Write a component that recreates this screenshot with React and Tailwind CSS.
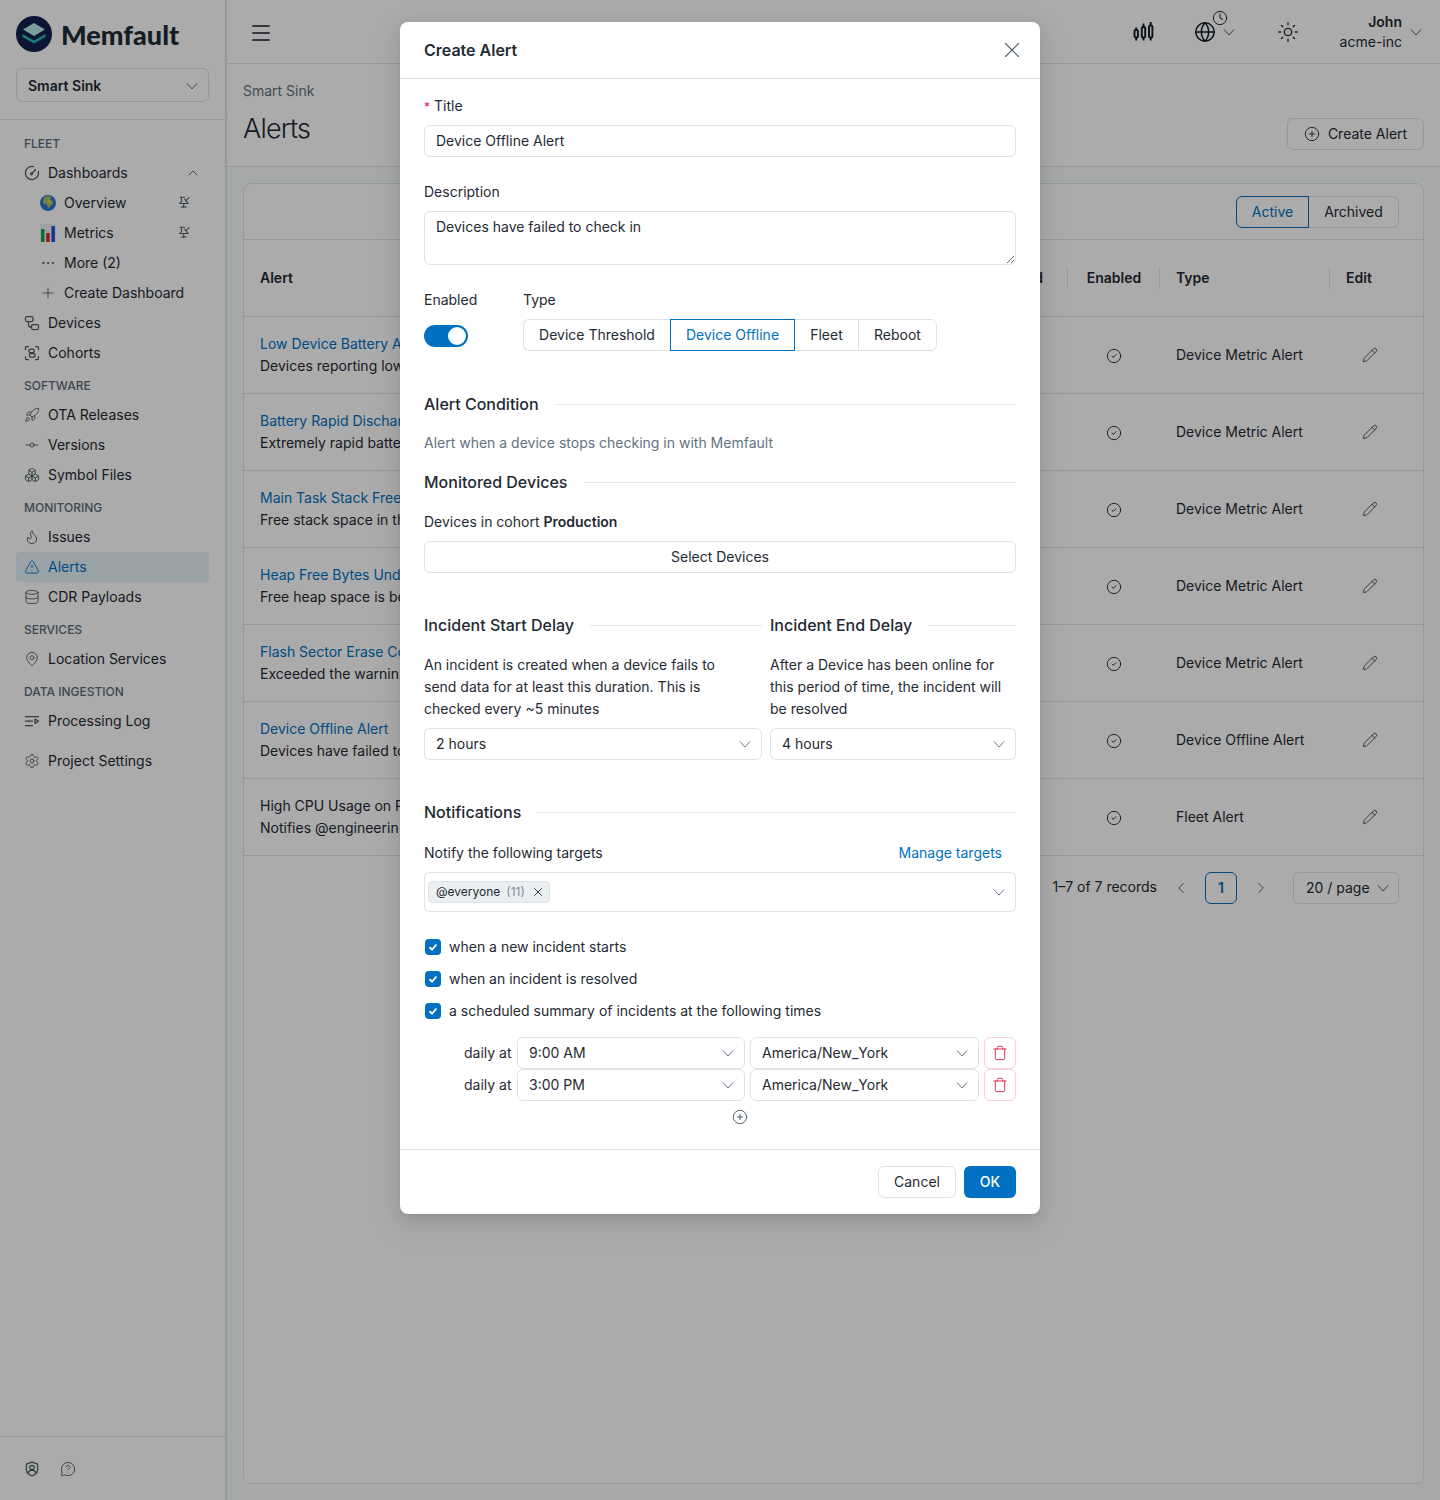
import React from "react";
import {
  ChevronUp, ChevronLeft, ChevronRight, Plus, Ellipsis, Rocket, GitCommitHorizontal, Flame, TriangleAlert, Database,
  MapPin, Settings, Pencil, CirclePlus, CircleCheck, Globe, Sun, Clock, Trash, X, Menu, MessageCircleQuestion, Boxes,
} from "lucide-react";

const Chev = ({ className = "" }) => (
  <svg width="14" height="14" viewBox="0 0 14 14" fill="none" stroke="currentColor" strokeWidth="1" className={className}>
    <path d="M2 4.500 7 10l5-5.500" />
  </svg>
);
const S = ({ children, size = 16, className = "" }) => (
  <svg width={size} height={size} viewBox="0 0 16 16" fill="none" stroke="currentColor" strokeWidth="1.250" strokeLinecap="round" strokeLinejoin="round" className={className}>{children}</svg>
);
const GaugeI = () => <S><path d="M9.500 1.600A6.600 6.600 0 1 0 14.400 6.500" /><circle cx="7.500" cy="8.800" r="1" /><path d="M8.200 8.200l3.300-3.700" /></S>;
const DevicesI = () => <S><rect x="1.500" y="1.500" width="7.500" height="5" rx="1.500" /><rect x="7.500" y="9.500" width="7" height="5" rx="1.500" /><path d="M4.500 6.500v3.500a2 2 0 0 0 2 2h1" /></S>;
const CohortsI = () => <S><path d="M1.500 4.500V2.500a1 1 0 0 1 1-1h2M11.500 1.500h2a1 1 0 0 1 1 1v2M1.500 11.500v2a1 1 0 0 0 1 1h2M14.500 11.500v2a1 1 0 0 1-1 1h-2" /><rect x="5" y="4" width="5" height="3.500" rx="1" /><rect x="5.500" y="8.500" width="5.500" height="3.500" rx="1" /></S>;
const LogI = () => <S><path d="M1.500 3.500h13M1.500 8h7M1.500 12.500h7" /><path d="M11 6l3.500 2.200L11 10.500z" /></S>;
const ShieldI = () => <S><path d="M8 1.200l5.600 2v5.200c0 3-2.600 5.200-5.600 6.400-3-1.200-5.600-3.400-5.600-6.400V3.200z" /><circle cx="8" cy="6.500" r="2.200" /><path d="M4.200 12c.6-2 2-2.800 3.800-2.800s3.200.8 3.800 2.800" /></S>;
const PinI = () => (
  <S size={14}><path d="M2.500 1.500h5M3.500 1.500l.8 4.500L2 8.500h9.500L9.500 6" /><path d="M6.500 8.500v4.500M3.500 12.500h6M7.500 3.800l1.500 1.500 3.500-3.500" /></S>
);
const GlobeEmoji = () => (
  <svg width="18" height="18" viewBox="0 0 18 18">
    <circle cx="9" cy="9" r="9" fill="#2f74d0" />
    <path d="M5 2.500C7 1 11 1 12.500 2c.8 1-1 2-1 3.200s2.500 1.300 3.200 2.300-1 3-2.300 4.300-2 3-3 2.700S8.500 11.500 7.500 10.500 4 9.800 3.600 8.300 4 4 5 2.500z" fill="#a8c25e" />
    <path d="M10 5c1 .5 2 1.500 1.500 3s-1.800 1-2.500 0S9 4.500 10 5z" fill="#f0d070" />
  </svg>
);
const ChartEmoji = () => (
  <svg width="16" height="18" viewBox="0 0 16 18">
    <rect width="16" height="18" fill="#eef1f6" />
    <rect x="1" y="5" width="3.500" height="13" fill="#16a34a" />
    <rect x="6.200" y="9" width="3.500" height="9" fill="#dc2626" />
    <rect x="11.400" y="2" width="3.500" height="16" fill="#1d4ed8" />
  </svg>
);
const Candle = () => (
  <svg width="22" height="22" viewBox="0 0 22 22" fill="none" stroke="currentColor" strokeWidth="1.900">
    <rect x="1.500" y="9" width="3.400" height="7.500" rx="1.300" /><path d="M3.200 6.500V9M3.200 16.500v3" />
    <rect x="8.800" y="6" width="3.400" height="10.500" rx="1.300" /><path d="M10.500 2.500V6M10.500 16.500v3" />
    <rect x="16" y="4.500" width="3.400" height="12" rx="1.300" /><path d="M17.700 1V4.500M17.700 16.500v3" />
  </svg>
);

const Ic = (C) => <C size={16} strokeWidth={1.350} />;

const Label = ({ children }) => (
  <div className="h-8 pl-2 pt-1 flex items-center text-xs font-medium text-[#5a6b78]">{children}</div>
);
const Item = ({ icon, children, active }) => (
  <div className={`h-[30px] pl-2 flex items-center gap-2 rounded ${active ? "bg-[#e4f3f8] text-[#0071c2]" : "text-[#1f2a33]"}`}>
    <span className={`w-4 h-4 flex items-center justify-center shrink-0 ${active ? "text-[#0071c2]" : "text-[#4b5b66]"}`}>{icon}</span>
    <span>{children}</span>
  </div>
);
const Sub = ({ icon, children, pin }) => (
  <div className="h-[30px] pl-6 pr-[17px] flex items-center gap-2 text-[#1f2a33]">
    <span className="w-4 h-[18px] flex items-center justify-center shrink-0 text-[#4b5b66]">{icon}</span>
    <span className="flex-1">{children}</span>
    {pin && <span className="text-[#4b5b66]"><PinI /></span>}
  </div>
);

const Sidebar = () => (
  <aside className="w-[227px] shrink-0 h-full border-r-2 border-[#dde6e8] flex flex-col bg-white text-sm">
    <div className="h-[68px] pl-4 flex items-center gap-2">
      <svg width="36" height="36" viewBox="0 0 36 36">
        <circle cx="18" cy="18" r="18" fill="#14204f" />
        <path d="M18 7l11 6.500L18 20 7 13.500z" fill="#b7ece6" />
        <path d="M6.500 18l11.500 6.500L29.500 18v3L18 27.500 6.500 21z" fill="#2bb6b0" />
      </svg>
      <span className="font-['Lato',sans-serif] font-black text-[27px] leading-none text-[#1e2c34] ml-[1px]">Memfault</span>
    </div>
    <div className="px-4 pb-[17px] border-b border-[#dde6e8]">
      <div className="h-[34px] border border-[#dde3e6] rounded-md pl-[11px] pr-[9px] pt-[1px] flex items-center justify-between">
        <span className="font-semibold text-[#1f2a33]">Smart Sink</span>
        <Chev className="text-[#64748b]" />
      </div>
    </div>
    <nav className="px-4 pt-[6px] flex-1">
      <Label>FLEET</Label>
      <div className="h-[30px] pl-2 pr-2 flex items-center gap-2 text-[#1f2a33]">
        <span className="w-4 h-4 text-[#4b5b66]"><GaugeI /></span>
        <span className="flex-1">Dashboards</span>
        <ChevronUp size={16} strokeWidth={1.300} className="text-[#4b5b66]" />
      </div>
      <Sub icon={<GlobeEmoji />} pin>Overview</Sub>
      <Sub icon={<ChartEmoji />} pin>Metrics</Sub>
      <Sub icon={<Ellipsis size={16} strokeWidth={1.500} />}>More (2)</Sub>
      <Sub icon={<Plus size={16} strokeWidth={1.300} />}>Create Dashboard</Sub>
      <Item icon={<DevicesI />}>Devices</Item>
      <Item icon={<CohortsI />}>Cohorts</Item>
      <Label>SOFTWARE</Label>
      <Item icon={Ic(Rocket)}>OTA Releases</Item>
      <Item icon={Ic(GitCommitHorizontal)}>Versions</Item>
      <Item icon={Ic(Boxes)}>Symbol Files</Item>
      <Label>MONITORING</Label>
      <Item icon={Ic(Flame)}>Issues</Item>
      <Item icon={Ic(TriangleAlert)} active>Alerts</Item>
      <Item icon={Ic(Database)}>CDR Payloads</Item>
      <Label>SERVICES</Label>
      <Item icon={Ic(MapPin)}>Location Services</Item>
      <Label>DATA INGESTION</Label>
      <Item icon={<LogI />}>Processing Log</Item>
      <div className="mt-2.5"><Item icon={Ic(Settings)}>Project Settings</Item></div>
    </nav>
    <div className="h-[64px] border-t border-[#dde6e8] pl-6 pt-[24px] flex items-start gap-5 text-[#4b5b66]">
      <ShieldI />
      <MessageCircleQuestion size={16} strokeWidth={1.350} />
    </div>
  </aside>
);

const rows = [
  ["Low Device Battery A", "Devices reporting low", "Device Metric Alert", true],
  ["Battery Rapid Dischar", "Extremely rapid batte", "Device Metric Alert", true],
  ["Main Task Stack Free", "Free stack space in th", "Device Metric Alert", true],
  ["Heap Free Bytes Und", "Free heap space is be", "Device Metric Alert", true],
  ["Flash Sector Erase Co", "Exceeded the warnin", "Device Metric Alert", true],
  ["Device Offline Alert", "Devices have failed to", "Device Offline Alert", true],
  ["High CPU Usage on P", "Notifies @engineerin", "Fleet Alert", false],
];

const Sep = () => <span className="absolute -left-px top-1/2 -translate-y-1/2 h-[22px] w-px bg-[#e3e8ea]" />;

const Main = () => (
  <main className="flex-1 min-w-0 h-full flex flex-col bg-[#fafdfd] text-sm text-[#1f2a33]">
    <header className="h-16 shrink-0 bg-white border-b border-[#dde6e8] flex items-center pl-6 pr-[17px]">
      <Menu size={24} strokeWidth={1.700} className="text-[#111827] -ml-[2px] mt-[2px]" />
      <div className="ml-auto flex items-center">
        <span className="text-[#111827]"><Candle /></span>
        <div className="relative ml-[39px] flex items-center text-[#111827]">
          <Globe size={22} strokeWidth={1.600} />
          <Clock size={16} strokeWidth={1.400} className="absolute left-[18px] -top-[11px] bg-white rounded-full" />
          <Chev className="text-[#4b5b66] ml-[6px]" />
        </div>
        <span className="ml-[41px] text-[#1f2a33]"><Sun size={22} strokeWidth={1.500} /></span>
        <div className="ml-[41px] text-right">
          <div className="font-semibold leading-5">John</div>
          <div className="leading-5">acme-inc</div>
        </div>
        <Chev className="ml-[7px] text-[#4b5b66]" />
      </div>
    </header>
    <section className="h-[103px] shrink-0 bg-white border-b border-[#dde6e8] pl-4 pr-4 relative">
      <div className="pt-4 leading-[22px] text-[#5f7380]">Smart Sink</div>
      <div className="mt-[10px] flex items-start justify-between">
        <h1 className="text-[27px] font-light leading-[34px] tracking-[-0.8px]">Alerts</h1>
        <div className="mt-[6px] h-8 w-[137px] border border-[#dde3e6] rounded-md flex items-center justify-center gap-2">
          <CirclePlus size={16} strokeWidth={1.350} />
          <span>Create Alert</span>
        </div>
      </div>
    </section>
    <div className="flex-1 min-h-0 px-4 pt-4 pb-4">
      <div className="h-full bg-white border border-[#dde6e8] rounded-lg flex flex-col">
        <div className="h-14 shrink-0 flex items-center justify-end pr-6 border-b border-[#dde6e8]">
          <div className="h-8 w-[73px] border border-[#0071c2] text-[#0071c2] rounded-l-md flex items-center justify-center">Active</div>
          <div className="h-8 w-[90px] border border-l-0 border-[#dde3e6] rounded-r-md flex items-center justify-center">Archived</div>
        </div>
        <div className="h-[77px] shrink-0 grid grid-cols-[1fr_92px_170px_93px] items-center border-b border-[#dde6e8] font-semibold">
          <div className="pl-4 pr-[25px] flex justify-between"><span>Alert</span><span>Threshold</span></div>
          <div className="relative h-full flex items-center justify-center"><Sep />Enabled</div>
          <div className="relative h-full flex items-center pl-4"><Sep />Type</div>
          <div className="relative h-full flex items-center pl-4"><Sep />Edit</div>
        </div>
        {rows.map(([t, d, ty, link]) => (
          <div key={t} className="h-[77px] shrink-0 grid grid-cols-[1fr_92px_170px_93px] items-center border-b border-[#dde6e8]">
            <div className="pl-4 leading-[22px] whitespace-nowrap overflow-hidden">
              <div className={link ? "text-[#0071c2]" : ""}>{t}</div>
              <div>{d}</div>
            </div>
            <div className="flex justify-center pt-[2px]"><CircleCheck size={16} strokeWidth={1.400} /></div>
            <div className="pl-4">{ty}</div>
            <div className="pl-8 text-[#3f4f5a]"><Pencil size={16} strokeWidth={1.400} /></div>
          </div>
        ))}
        <div className="mt-4 pr-6 flex items-center justify-end">
          <span className="-mt-[2px]">1–7 of 7 records</span>
          <ChevronLeft size={18} strokeWidth={1.200} className="ml-[15px] text-[#4b5b66]" />
          <span className="ml-[15px] w-8 h-8 border border-[#0071c2] text-[#0071c2] rounded-md font-semibold flex items-center justify-center">1</span>
          <ChevronRight size={18} strokeWidth={1.200} className="ml-[15px] text-[#4b5b66]" />
          <div className="ml-[23px] h-8 w-[106px] border border-[#dde3e6] rounded-md flex items-center pl-3 gap-[6px]">
            <span>20 / page</span><Chev className="text-[#4b5b66]" />
          </div>
        </div>
      </div>
    </div>
  </main>
);

const Heading = ({ children, className = "" }) => (
  <div className={`flex items-center gap-4 ${className}`}>
    <span className="text-base font-medium leading-6">{children}</span>
    <span className="flex-1 h-px bg-[#e3e8ea]" />
  </div>
);
const Select = ({ children, className = "" }) => (
  <div className={`h-8 border border-[#dde3e6] rounded-md pl-[11px] pr-[9px] flex items-center justify-between ${className}`}>
    <span>{children}</span><Chev className="text-[#64748b]" />
  </div>
);
const Check = ({ children }) => (
  <div className="h-8 flex items-center gap-2 pl-[1px]">
    <span className="w-4 h-4 rounded-[4px] bg-[#0071c2] flex items-center justify-center">
      <svg width="12" height="12" viewBox="0 0 12 12" fill="none" stroke="white" strokeWidth="1.800"><path d="M2.500 6.200 5 8.700 9.500 3.500" /></svg>
    </span>
    <span>{children}</span>
  </div>
);
const Del = () => (
  <div className="w-8 h-8 border border-[#fbd0d8] rounded-md flex items-center justify-center text-[#dc2647]">
    <Trash size={16} strokeWidth={1.400} />
  </div>
);

const Modal = () => (
  <div className="absolute left-[400px] top-[22px] w-[640px] h-[1192px] bg-white rounded-lg text-sm text-[#1f2a33] shadow-[0_6px_16px_0_rgba(0,0,0,0.08),0_3px_6px_-4px_rgba(0,0,0,0.12),0_9px_28px_8px_rgba(0,0,0,0.05)] flex flex-col">
    <div className="h-[57px] shrink-0 border-b border-[#dde6e8] pl-6 pr-[15px] flex items-center justify-between">
      <span className="text-base font-semibold">Create Alert</span>
      <X size={26} strokeWidth={1} className="text-[#4b5b66]" />
    </div>
    <div className="flex-1 px-6 pt-4 leading-[22px]">
      <div className="mb-2"><span className="text-[#e11d48] text-xs mr-1">*</span>Title</div>
      <input readOnly value="Device Offline Alert" className="block w-full h-8 border border-[#dde3e6] rounded-md px-[11px] pb-[2px] outline-none" />
      <div className="mt-6 mb-2">Description</div>
      <textarea readOnly value="Devices have failed to check in" className="block w-full h-[54px] border border-[#dde3e6] rounded-md px-[11px] py-1 outline-none" />
      <div className="mt-6 flex">
        <div className="w-[99px]">
          <div className="mb-2">Enabled</div>
          <div className="mt-[14px] w-[44px] h-[22px] rounded-full bg-[#0071c2] flex items-center justify-end pr-[2px]">
            <span className="w-[18px] h-[18px] rounded-full bg-white" />
          </div>
        </div>
        <div>
          <div className="mb-2">Type</div>
          <div className="flex h-8">
            <span className="w-[147px] border border-r-0 border-[#dde3e6] rounded-l-md flex items-center justify-center">Device Threshold</span>
            <span className="w-[125px] border border-[#0071c2] text-[#0071c2] flex items-center justify-center">Device Offline</span>
            <span className="w-[63px] border border-x-0 border-[#dde3e6] flex items-center justify-center">Fleet</span>
            <span className="w-[79px] border border-[#dde3e6] rounded-r-md flex items-center justify-center">Reboot</span>
          </div>
        </div>
      </div>
      <Heading className="mt-[41px]">Alert Condition</Heading>
      <div className="mt-4 text-[#5f7380]">Alert when a device stops checking in with Memfault</div>
      <Heading className="mt-4">Monitored Devices</Heading>
      <div className="mt-[17px] mb-2">Devices in cohort <span className="font-semibold">Production</span></div>
      <div className="h-8 border border-[#dde3e6] rounded-md flex items-center justify-center">Select Devices</div>
      <div className="mt-10 flex gap-2">
        <div className="w-[338px]">
          <Heading>Incident Start Delay</Heading>
          <div className="mt-[17px] mb-2 pr-6">An incident is created when a device fails to send data for at least this duration. This is checked every ~5 minutes</div>
          <Select>2 hours</Select>
        </div>
        <div className="flex-1">
          <Heading>Incident End Delay</Heading>
          <div className="mt-[17px] mb-2">After a Device has been online for this period of time, the incident will be resolved</div>
          <Select>4 hours</Select>
        </div>
      </div>
      <Heading className="mt-10">Notifications</Heading>
      <div className="mt-[18px] mb-2 pr-[14px] flex justify-between">
        <span>Notify the following targets</span>
        <span className="text-[#0071c2]">Manage targets</span>
      </div>
      <div className="h-10 border border-[#dde3e6] rounded-md pl-[3px] pr-[9px] flex items-center justify-between">
        <div className="w-[122px] h-[22px] bg-[#eaf0f1] border border-[#dde3e6] rounded text-xs flex items-center pl-[7px]">
          <span>@everyone</span><span className="ml-[6px] text-[#7b8a94]">(11)</span>
          <X size={14} strokeWidth={1.500} className="ml-[6px]" />
        </div>
        <Chev className="text-[#64748b]" />
      </div>
      <div className="mt-[19px]">
        <Check>when a new incident starts</Check>
        <Check>when an incident is resolved</Check>
        <Check>a scheduled summary of incidents at the following times</Check>
      </div>
      <div className="mt-2.5 pl-10">
        {["9:00 AM", "3:00 PM"].map((t) => (
          <div key={t} className="flex items-center">
            <span className="w-[47px] mr-[6px] whitespace-nowrap">daily at</span>
            <Select className="w-[228px] mr-[5px]">{t}</Select>
            <Select className="w-[229px] mr-[5px]">America/New_York</Select>
            <Del />
          </div>
        ))}
      </div>
      <div className="mt-2 pl-10 flex justify-center text-[#3f4f5a]"><CirclePlus size={16} strokeWidth={1.350} /></div>
    </div>
    <div className="h-[65px] shrink-0 border-t border-[#dde6e8] px-6 flex items-center justify-end gap-2">
      <span className="h-8 w-[78px] border border-[#dde3e6] rounded-md flex items-center justify-center">Cancel</span>
      <span className="h-8 w-[52px] bg-[#0071c2] text-white font-medium rounded-md flex items-center justify-center">OK</span>
    </div>
  </div>
);

export default function App() {
  return (
    <div className="relative w-full h-[1500px] overflow-hidden flex font-['Inter',sans-serif]">
      <Sidebar />
      <Main />
      <div className="absolute inset-0 bg-black/33" />
      <Modal />
    </div>
  );
}
